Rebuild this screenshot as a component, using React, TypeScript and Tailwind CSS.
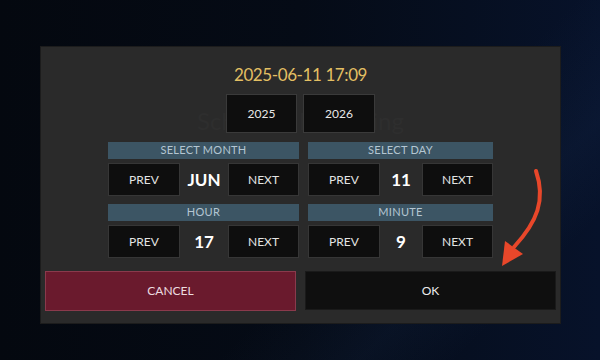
import React from "react";

type Stepper = { label: string; value: string };

function StepperBlock({ label, value }: Stepper) {
  return (
    <div className="flex flex-col">
      <div className="flex h-[17px] items-center justify-center bg-[#3c5564] text-[11px] tracking-wide text-[#b4c6d2]">
        {label}
      </div>
      <div className="mt-[4px] flex h-[33px] items-stretch">
        <button className="w-[72px] border border-[#363636] bg-[#0e0e0e] text-[12px] text-[#e4e4e4]">
          PREV
        </button>
        <div className="flex flex-1 items-center justify-center text-[17px] font-bold text-white">
          {value}
        </div>
        <button className="w-[71px] border border-[#363636] bg-[#0e0e0e] text-[12px] text-[#e4e4e4]">
          NEXT
        </button>
      </div>
    </div>
  );
}

export default function App() {
  return (
    <div
      className="relative h-[360px] w-[600px] overflow-hidden bg-gradient-to-r from-[#04080f] via-[#050b16] to-[#07122a] pl-[41px] pt-[47px]"
      style={{ fontFamily: "Lato, 'Open Sans', sans-serif" }}
    >
      {/* faint diagonal light streaks in the backdrop */}
      <div className="pointer-events-none absolute inset-0 bg-[linear-gradient(135deg,transparent_60%,rgba(40,70,120,0.10)_75%,transparent_85%)]" />

      <div className="relative flex h-[276px] w-[519px] flex-col items-center bg-[#2a2a2a] pt-[15px] shadow-[0_0_0_1px_#1c1c1c]">
        {/* ghost text behind controls */}
        <div className="pointer-events-none absolute left-0 right-0 top-[56px] text-center text-[24px] text-[#2e2e2e]">
          Schedule Recording
        </div>

        <div className="relative h-[25px] text-[17px] leading-[25px] tracking-[-0.4px] text-[#e3bf63]">
          2025-06-11 17:09
        </div>

        <div className="relative mt-[7px] flex gap-[6px]">
          <button className="h-[39px] w-[71px] border border-[#3a3a3a] bg-[#0e0e0e] text-[12px] text-[#e8e8e8]">
            2025
          </button>
          <button className="h-[39px] w-[72px] border border-[#3a3a3a] bg-[#0e0e0e] text-[12px] text-[#e8e8e8]">
            2026
          </button>
        </div>

        <div className="relative mt-[9px] grid grid-cols-[191px_185px] gap-x-[9px] gap-y-[8px]">
          <StepperBlock label="SELECT MONTH" value="JUN" />
          <StepperBlock label="SELECT DAY" value="11" />
          <StepperBlock label="HOUR" value="17" />
          <StepperBlock label="MINUTE" value="9" />
        </div>

        <div className="mt-auto mb-[12px] flex w-full gap-[9px] px-[4px]">
          <button className="h-[40px] flex-1 border border-[#8a3a4c] bg-[#6a1a2d] text-[12px] text-[#ecdde0]">
            CANCEL
          </button>
          <button className="h-[39px] flex-1 border border-[#1a1a1a] bg-[#0f0f0f] text-[12px] text-[#ececec]">
            OK
          </button>
        </div>
      </div>

      {/* annotation arrow */}
      <svg
        className="pointer-events-none absolute left-0 top-0"
        width="600"
        height="360"
        viewBox="0 0 600 360"
      >
        <path
          d="M536 171 C 546 200, 537 222, 514 247"
          fill="none"
          stroke="#e8472a"
          strokeWidth="4"
          strokeLinecap="round"
        />
        <polygon points="502,266 505,241 523,254" fill="#e8472a" />
      </svg>
    </div>
  );
}
